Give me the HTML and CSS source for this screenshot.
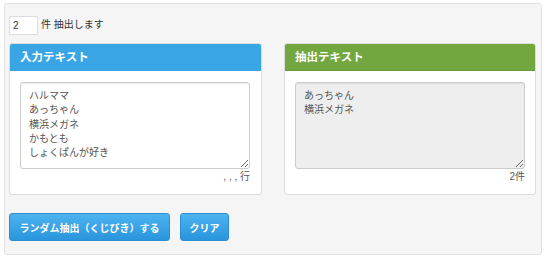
FILE: index.html
```html
<!DOCTYPE html>
<html lang="ja">
<head>
<meta charset="utf-8">
<link rel="stylesheet" href="styles.css">
</head>
<body>
<div class="well">
  <div class="count-row">
    <input class="count-input" type="text" value="2">
    <span class="count-label">件 抽出します</span>
  </div>
  <div class="panels">
    <div class="panel panel-blue">
      <div class="panel-heading">入力テキスト</div>
      <div class="panel-body">
        <textarea class="ta">ハルママ
あっちゃん
横浜メガネ
かもとも
しょくぱんが好き</textarea>
        <div class="meta">, , , 行</div>
      </div>
    </div>
    <div class="panel panel-green">
      <div class="panel-heading">抽出テキスト</div>
      <div class="panel-body">
        <textarea class="ta ta-readonly" readonly>あっちゃん
横浜メガネ</textarea>
        <div class="meta">2件</div>
      </div>
    </div>
  </div>
  <div class="buttons">
    <button class="btn btn-wide">ランダム抽出（くじびき）する</button>
    <button class="btn btn-clear">クリア</button>
  </div>
</div>
</body>
</html>
```

FILE: styles.css
```css
html, body {
  margin: 0;
  padding: 0;
  background: #ffffff;
}
body {
  font-family: "Liberation Sans", "Noto Sans CJK JP", sans-serif;
  font-size: 10px;
  line-height: 14.3px;
  color: #333333;
}
.well {
  box-sizing: border-box;
  margin: 3px 0 0 4px;
  width: 538px;
  height: 252px;
  background: #f5f5f5;
  border: 1px solid #e3e3e3;
  border-radius: 3px;
  padding: 12px 4px 0 4px;
}
.count-row {
  display: flex;
  align-items: center;
  height: 19px;
}
.count-input {
  box-sizing: border-box;
  width: 29px;
  height: 19px;
  margin: 0;
  padding: 0 3px;
  border: 1px solid #dddddd;
  border-radius: 1px;
  background: #fff;
  font-family: inherit;
  font-size: 10px;
  color: #333;
  outline: none;
}
.count-label {
  margin-left: 3px;
  color: #333;
}
.panels {
  display: flex;
  gap: 22px;
  margin-top: 8px;
}
.panel {
  box-sizing: border-box;
  width: 253px;
  height: 152px;
  background: #fff;
  border: 1px solid #dcdcdc;
  border-radius: 3px;
  overflow: hidden;
}
.panel-green {
  width: 252px;
}
.panel-heading {
  height: 26px;
  line-height: 26px;
  padding-left: 11px;
  margin: -1px -1px 0 -1px;
  padding-top: 1px;
  color: #fff;
  font-weight: bold;
  font-size: 11.5px;
  border-radius: 3px 3px 0 0;
}
.panel-blue .panel-heading {
  background: #3aa5e5;
  border-bottom: 1px solid #3aa5e5;
}
.panel-green .panel-heading {
  background: #72a63f;
  border-bottom: 1px solid #6a9c3a;
}
.panel-body {
  padding: 11px 10px 0 10px;
}
.ta {
  display: block;
  box-sizing: border-box;
  width: 230px;
  height: 87px;
  margin: 0;
  padding: 6px 8px 5px 8px;
  border: 1px solid #cccccc;
  border-radius: 3px;
  background: #fff;
  font-family: "Liberation Sans", "Noto Sans CJK JP", sans-serif;
  font-size: 10px;
  line-height: 14.3px;
  color: #555555;
  box-shadow: inset 0 1px 1px rgba(0,0,0,0.075);
  outline: none;
}
.ta-readonly {
  background: #eeeeee;
}
.meta {
  text-align: right;
  width: 230px;
  margin-top: 1px;
  color: #555;
  line-height: 14px;
}
.buttons {
  display: flex;
  gap: 10px;
  margin-top: 18px;
}
.btn {
  box-sizing: border-box;
  height: 28px;
  margin: 0;
  padding: 0;
  border: 1px solid #2b8fd6;
  border-radius: 3px;
  background: linear-gradient(#4db3f0, #2a95dd);
  color: #fff;
  font-family: "Liberation Sans", "Noto Sans CJK JP", sans-serif;
  font-size: 10px;
  font-weight: bold;
  white-space: nowrap;
  cursor: pointer;
}
.btn-wide {
  width: 161px;
}
.btn-clear {
  width: 49px;
}
```
